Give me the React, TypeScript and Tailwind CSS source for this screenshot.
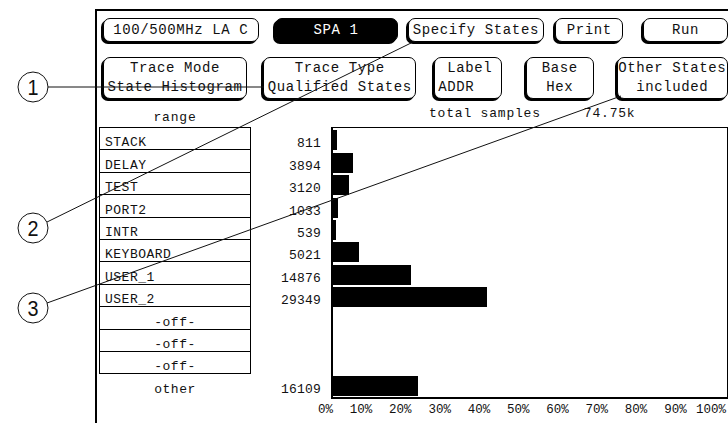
import React from 'react'

const TOTAL = 74750
const CHART_W = 393

const ranges = [
  { name: 'STACK', count: 811 },
  { name: 'DELAY', count: 3894 },
  { name: 'TEST', count: 3120 },
  { name: 'PORT2', count: 1033 },
  { name: 'INTR', count: 539 },
  { name: 'KEYBOARD', count: 5021 },
  { name: 'USER_1', count: 14876 },
  { name: 'USER_2', count: 29349 },
  { name: '-off-', count: 0, off: true },
  { name: '-off-', count: 0, off: true },
  { name: '-off-', count: 0, off: true },
]

const other = 16109

const ticks = ['10%', '20%', '30%', '40%', '50%', '60%', '70%', '80%', '90%', '100%']

function Btn({
  children,
  className = '',
  dark = false,
}: {
  children: React.ReactNode
  className?: string
  dark?: boolean
}) {
  return (
    <div
      className={`flex flex-col items-center justify-center rounded-[7px] border border-black shadow-[-2px_2px_0_#000] ${
        dark ? 'bg-black text-white' : 'bg-white text-[#111]'
      } ${className}`}
    >
      {children}
    </div>
  )
}

function Callouts() {
  return (
    <svg
      className="pointer-events-none absolute left-0 top-0"
      width={728}
      height={423}
      viewBox="0 0 728 423"
    >
      <g stroke="#111" strokeWidth={1} fill="none">
        <circle cx={33} cy={87} r={15} />
        <line x1={48} y1={87} x2={264} y2={87} />
        <circle cx={33} cy={228} r={15} />
        <line x1={47} y1={222} x2={411} y2={43} />
        <circle cx={33} cy={308} r={15} />
        <line x1={47} y1={303} x2={621} y2={96} />
      </g>
      <g
        fill="#111"
        fontFamily="'Liberation Sans', Arial, sans-serif"
        fontSize={22}
        textAnchor="middle"
      >
        <text x={33} y={95} transform="translate(3.3 0) scale(0.9 1)">1</text>
        <text x={33} y={236} transform="translate(3.3 0) scale(0.9 1)">2</text>
        <text x={33} y={316} transform="translate(3.3 0) scale(0.9 1)">3</text>
      </g>
    </svg>
  )
}

export default function App() {
  return (
    <div className="relative h-[423px] w-[728px] overflow-hidden bg-white font-['Liberation_Mono',monospace] text-[14px] text-[#111]">
      <div className="ml-[95px] mt-[9px] h-[414px] border-l-2 border-t-2 border-black">
        {/* top row */}
        <div className="mt-[7px] flex h-[24px] tracking-[0.6px]">
          <Btn className="ml-[6px] w-[156px]">100/500MHz LA C</Btn>
          <Btn dark className="ml-[16px] w-[123px]">SPA 1</Btn>
          <Btn className="ml-[10px] w-[137px]">Specify States</Btn>
          <Btn className="ml-[11px] w-[68px]">Print</Btn>
          <Btn className="ml-[20px] w-[85px]">Run</Btn>
        </div>

        {/* second row */}
        <div className="mt-[15px] flex h-[42px] leading-[19px] tracking-[0.6px]">
          <Btn className="ml-[6px] w-[145px]">
            <span>Trace Mode</span>
            <span>State Histogram</span>
          </Btn>
          <Btn className="ml-[16px] w-[154px]">
            <span>Trace Type</span>
            <span>Qualified States</span>
          </Btn>
          <Btn className="ml-[18px] w-[68px] !items-start pl-[3px]">
            <span className="self-center">Label</span>
            <span>ADDR</span>
          </Btn>
          <Btn className="ml-[24px] w-[68px]">
            <span>Base</span>
            <span>Hex</span>
          </Btn>
          <Btn className="ml-[23px] w-[112px]">
            <span>Other States</span>
            <span>included</span>
          </Btn>
        </div>

        {/* headers */}
        <div className="flex h-[28px] text-[13px] leading-none tracking-[0.8px]">
          <div className="ml-[2px] flex w-[152px] items-end justify-center pb-[3px]">range</div>
          <div className="ml-[80px] flex items-end pb-[7px] pl-[98px]">
            <span>total samples</span>
            <span className="ml-[43px]">74.75k</span>
          </div>
        </div>

        {/* body */}
        <div className="flex">
          <div className="ml-[2px] w-[152px] text-[13px] leading-none tracking-[0.5px]">
            <div className="border-x border-t border-black">
              {ranges.map((r, i) => (
                <div
                  key={i}
                  className={`flex h-[22.4px] items-end border-b border-black ${
                    r.off ? 'justify-center' : 'pl-[5px]'
                  }`}
                >
                  {r.name}
                </div>
              ))}
            </div>
            <div className="flex h-[22.5px] items-end justify-center pb-[1px]">other</div>
          </div>

          <div className="w-[70px] pt-[1px] text-right text-[13px] leading-none tracking-[0.2px]">
            {ranges.map((r, i) => (
              <div key={i} className="flex h-[22.4px] items-end justify-end">
                {r.off ? '' : r.count}
              </div>
            ))}
            <div className="flex h-[22.4px] items-end justify-end pb-[1px]">{other}</div>
          </div>

          <div className="ml-[10px]">
            <div className="w-[397px] border-b-2 border-l-2 border-r border-t border-black">
              {ranges.map((r, i) => (
                <div key={i} className="flex h-[22.4px] items-end">
                  {!r.off && (
                    <div
                      className="h-[20px] bg-black"
                      style={{ width: `${(r.count / TOTAL) * CHART_W}px` }}
                    />
                  )}
                </div>
              ))}
              <div className="flex h-[22.4px] items-end pb-[1px]">
                <div
                  className="h-[20px] bg-black"
                  style={{ width: `${(other / TOTAL) * CHART_W}px` }}
                />
              </div>
            </div>
            <div className="ml-[-22px] mt-[2px] flex text-[12.5px] tracking-[0px]">
              <div className="w-[24px] text-right">0%</div>
              {ticks.map(t => (
                <div key={t} className="w-[39.3px] shrink-0 whitespace-nowrap text-right">
                  {t}
                </div>
              ))}
            </div>
          </div>
        </div>
      </div>
      <Callouts />
    </div>
  )
}
